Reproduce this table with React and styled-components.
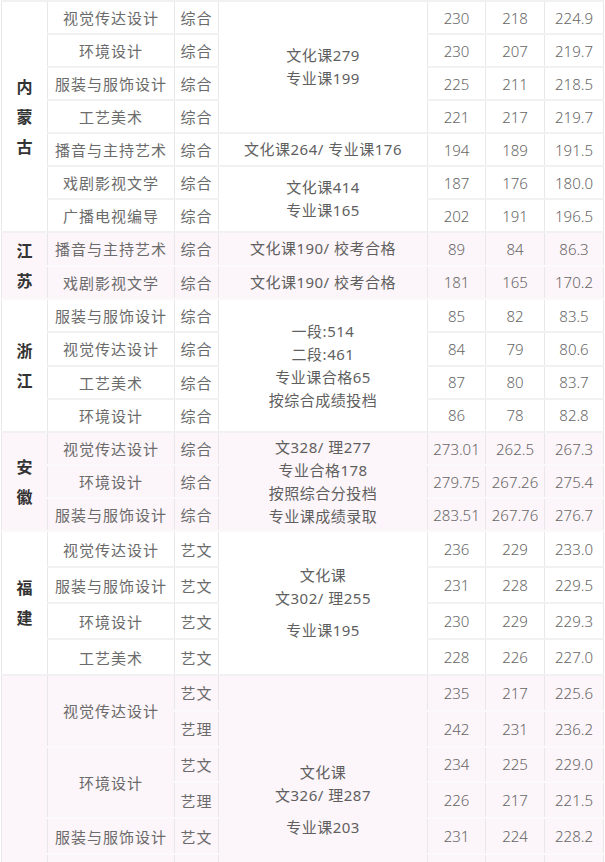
import React from "react";
import styled, { createGlobalStyle } from "styled-components";

const GlobalStyle = createGlobalStyle`
  html, body {
    margin: 0;
    padding: 0;
    background: #ffffff;
  }
  body {
    font-family: "Noto Sans", "Noto Sans CJK SC", sans-serif;
  }
`;

const Page = styled.div`
  width: 605px;
  height: 862px;
  overflow: hidden;
  padding-left: 1px;
  box-sizing: border-box;
`;

const Table = styled.table`
  width: 602px;
  table-layout: fixed;
  border-collapse: collapse;
  color: #666;
  font-size: 15px;
`;

const Row = styled.tr`
  height: ${(p) => p.$h}px;
`;

const Cell = styled.td`
  padding: 0;
  text-align: center;
  vertical-align: middle;
  background: ${(p) => (p.$pink ? "#fcf5f9" : "#ffffff")};
  border-top: 2px solid ${(p) => (p.$pink ? "#fbf9fa" : "#f1f1f1")};
  border-bottom: 2px solid ${(p) => (p.$pink ? "#fbf9fa" : "#f1f1f1")};
  border-left: 1px solid #e8e8e8;
  border-right: 1px solid #e8e8e8;
  letter-spacing: ${(p) => (p.$num ? "0" : "1px")};
  color: ${(p) => (p.$num ? "#666" : "#6b6b6b")};
  font-weight: ${(p) => (p.$num ? 300 : 400)};
  white-space: nowrap;
`;

const Province = styled(Cell)`
  font-weight: bold;
  color: #333;
  font-size: 16px;
  letter-spacing: 0;
`;

const ProvinceChar = styled.div`
  line-height: 30px;
`;

const Req = styled(Cell)`
  color: #5f5f5f;
  letter-spacing: 0.5px;
`;

const Line = styled.div`
  line-height: 23px;
  margin-top: ${(p) => p.$gap || 0}px;
`;

const Col = styled.col`
  width: ${(p) => p.$w}px;
`;

const groups = [
  {
    name: "内蒙古",
    pink: false,
    h: 33,
    rows: [
      { major: "视觉传达设计", cat: "综合", req: ["文化课279", "专业课199"], reqSpan: 4, nums: ["230", "218", "224.9"] },
      { major: "环境设计", cat: "综合", nums: ["230", "207", "219.7"] },
      { major: "服装与服饰设计", cat: "综合", nums: ["225", "211", "218.5"] },
      { major: "工艺美术", cat: "综合", nums: ["221", "217", "219.7"] },
      { major: "播音与主持艺术", cat: "综合", req: ["文化课264/ 专业课176"], nums: ["194", "189", "191.5"] },
      { major: "戏剧影视文学", cat: "综合", req: ["文化课414", "专业课165"], reqSpan: 2, nums: ["187", "176", "180.0"] },
      { major: "广播电视编导", cat: "综合", nums: ["202", "191", "196.5"] },
    ],
  },
  {
    name: "江苏",
    pink: true,
    h: 33.5,
    rows: [
      { major: "播音与主持艺术", cat: "综合", req: ["文化课190/ 校考合格"], nums: ["89", "84", "86.3"] },
      { major: "戏剧影视文学", cat: "综合", req: ["文化课190/ 校考合格"], nums: ["181", "165", "170.2"] },
    ],
  },
  {
    name: "浙江",
    pink: false,
    h: 33.25,
    rows: [
      { major: "服装与服饰设计", cat: "综合", req: ["一段:514", "二段:461", "专业课合格65", "按综合成绩投档"], reqSpan: 4, nums: ["85", "82", "83.5"] },
      { major: "视觉传达设计", cat: "综合", nums: ["84", "79", "80.6"] },
      { major: "工艺美术", cat: "综合", nums: ["87", "80", "83.7"] },
      { major: "环境设计", cat: "综合", nums: ["86", "78", "82.8"] },
    ],
  },
  {
    name: "安徽",
    pink: true,
    h: 33,
    rows: [
      { major: "视觉传达设计", cat: "综合", req: ["文328/ 理277", "专业合格178", "按照综合分投档", "专业课成绩录取"], reqSpan: 3, nums: ["273.01", "262.5", "267.3"] },
      { major: "环境设计", cat: "综合", nums: ["279.75", "267.26", "275.4"] },
      { major: "服装与服饰设计", cat: "综合", nums: ["283.51", "267.76", "276.7"] },
    ],
  },
  {
    name: "福建",
    pink: false,
    h: 36,
    rows: [
      { major: "视觉传达设计", cat: "艺文", req: ["文化课", "文302/ 理255", "专业课195"], reqGap: 9, reqSpan: 4, nums: ["236", "229", "233.0"] },
      { major: "服装与服饰设计", cat: "艺文", nums: ["231", "228", "229.5"] },
      { major: "环境设计", cat: "艺文", nums: ["230", "229", "229.3"] },
      { major: "工艺美术", cat: "艺文", nums: ["228", "226", "227.0"] },
    ],
  },
  {
    name: "",
    pink: true,
    h: 35.8,
    rows: [
      { major: "视觉传达设计", majorSpan: 2, cat: "艺文", req: ["文化课", "文326/ 理287", "专业课203"], reqGap: 9, reqSpan: 7, nums: ["235", "217", "225.6"] },
      { major: null, cat: "艺理", nums: ["242", "231", "236.2"] },
      { major: "环境设计", majorSpan: 2, cat: "艺文", nums: ["234", "225", "229.0"] },
      { major: null, cat: "艺理", nums: ["226", "217", "221.5"] },
      { major: "服装与服饰设计", cat: "艺文", nums: ["231", "224", "228.2"] },
      { major: "", cat: "", nums: ["", "", ""] },
      { major: "", cat: "", nums: ["", "", ""] },
    ],
  },
];

const App = () => {
  return (
    <Page>
      <GlobalStyle />
      <Table>
        <colgroup>
          <Col $w={46} />
          <Col $w={127} />
          <Col $w={44} />
          <Col $w={209} />
          <Col $w={58} />
          <Col $w={59} />
          <Col $w={59} />
        </colgroup>
        <tbody>
          {groups.map((g) =>
            g.rows.map((r, i) => (
              <Row key={g.name + i} $h={g.h}>
                {i === 0 && (
                  <Province rowSpan={g.rows.length} $pink={g.pink}>
                    {g.name.split("").map((c) => (
                      <ProvinceChar key={c}>{c}</ProvinceChar>
                    ))}
                  </Province>
                )}
                {r.major !== null && (
                  <Cell rowSpan={r.majorSpan || 1} $pink={g.pink}>
                    {r.major}
                  </Cell>
                )}
                <Cell $pink={g.pink}>{r.cat}</Cell>
                {r.req && (
                  <Req rowSpan={r.reqSpan || 1} $pink={g.pink}>
                    {r.req.map((l, k) => (
                      <Line key={k} $gap={k === 2 && r.reqGap ? r.reqGap : 0}>
                        {l}
                      </Line>
                    ))}
                  </Req>
                )}
                {r.nums.map((n, k) => (
                  <Cell key={k} $num $pink={g.pink}>
                    {n}
                  </Cell>
                ))}
              </Row>
            ))
          )}
        </tbody>
      </Table>
    </Page>
  );
};

export default App;
